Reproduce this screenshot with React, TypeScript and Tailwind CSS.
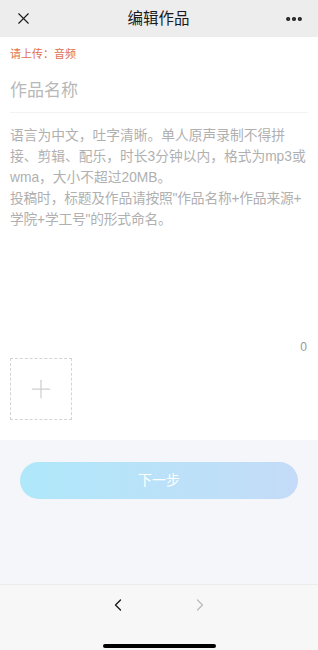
import { X, MoreHorizontal, Plus, ChevronLeft, ChevronRight } from 'lucide-react'

const font = { fontFamily: '"Liberation Sans", "Noto Sans CJK SC", sans-serif' }

function App() {
  return (
    <div className="w-[318px] h-[650px] flex flex-col bg-[#f5f6fa] overflow-hidden" style={font}>
      {/* header */}
      <div className="h-[37px] bg-[#ededed] flex items-center justify-between px-[14px] shrink-0">
        <X size={19} strokeWidth={1.4} className="text-[#1a1a1a]" />
        <span className="text-[15.5px] text-[#1a1a1a]">编辑作品</span>
        <MoreHorizontal size={20} strokeWidth={3} className="text-[#1a1a1a]" />
      </div>

      {/* form */}
      <div className="bg-white h-[403px] shrink-0 flex flex-col px-[10px]">
        <p className="mt-[9px] text-[11px] leading-[16px] text-[#e0704f]">请上传：音频</p>
        <div className="mt-[17px] pb-[9px] border-b border-[#f2f2f2] text-[17px] leading-[24px] text-[#b8b8b8]">
          作品名称
        </div>
        <div className="mt-[12px] text-[13.75px] leading-[21px] text-[#b0b0b0]">
          <p>语言为中文，吐字清晰。单人原声录制不得拼接、剪辑、配乐，时长3分钟以内，格式为mp3或wma，大小不超过20MB。</p>
          <p className="tracking-[-0.2px]">
            投稿时，标题及作品请按照"作品名称+<span className="whitespace-nowrap">作品来源+</span>
            <br />
            学院+学工号"的形式命名。
          </p>
        </div>
        <div className="flex-1" />
        <div className="text-right text-[12px] leading-[16px] text-[#999] pr-[1px]">0</div>
        <div className="mt-[3px] mb-[20px] w-[62px] h-[62px] border border-dashed border-[#d4d4d4] flex items-center justify-center">
          <Plus size={30} strokeWidth={1} className="text-[#cfcfcf]" />
        </div>
      </div>

      {/* button */}
      <div className="px-[20px] pt-[22px]">
        <button className="w-full h-[37px] rounded-full bg-gradient-to-r from-[#afe8fa] to-[#c4dbf8] text-white text-[14px]">
          下一步
        </button>
      </div>

      <div className="flex-1" />

      {/* bottom nav */}
      <div className="h-[66px] bg-[#f7f7f7] border-t border-[#ececec] flex flex-col items-center shrink-0">
        <div className="flex items-center gap-[62px] mt-[10px] h-[20px]">
          <ChevronLeft size={20} strokeWidth={1.6} className="text-[#1a1a1a]" />
          <ChevronRight size={20} strokeWidth={1.6} className="text-[#bdbdbd]" />
        </div>
        <div className="mt-[29px] w-[113px] h-[4px] rounded-full bg-black" />
      </div>
    </div>
  )
}

export default App
